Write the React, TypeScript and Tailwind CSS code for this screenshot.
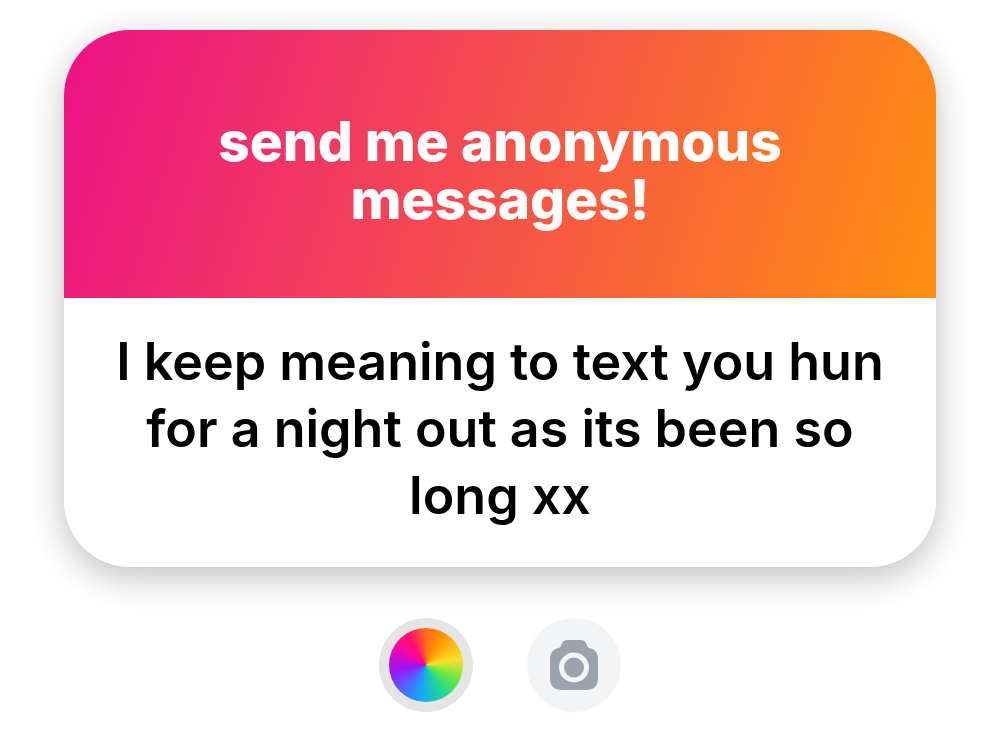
import { useState } from "react";

type PromptCardProps = {
  prompt: string;
  reply: string;
};

function PromptCard({ prompt, reply }: PromptCardProps) {
  return (
    <article className="overflow-hidden rounded-[66px] bg-white text-center shadow-[0_10px_36px_rgba(0,0,0,0.25)]">
      <header className="bg-[linear-gradient(107deg,#ec1187,#ff8f10)] px-32 pt-[82px] pb-[70px]">
        <h1 className="text-[55px] leading-[58px] font-extrabold text-white">{prompt}</h1>
      </header>
      <p className="px-12 pt-[30px] pb-[38px] text-[52px] leading-[67px] font-semibold text-black">{reply}</p>
    </article>
  );
}

function CameraIcon() {
  return (
    <svg viewBox="0 0 50 50" className="size-[50px]" aria-hidden="true">
      <path
        d="M10 8 C12 7 12 5 13 3 C14 1 16 0 18 0 H32 C34 0 36 1 37 3 C38 5 38 7 40 8 C46 9 49 13 49 19 V38 C49 46 45 50 37 50 H13 C5 50 1 46 1 38 V19 C1 13 4 9 10 8 Z"
        fill="#9ca3af"
      />
      <circle cx="25" cy="27.5" r="12.5" fill="none" stroke="#f3f4f6" strokeWidth="5" />
    </svg>
  );
}

export default function App() {
  const [picked, setPicked] = useState(false);

  return (
    <main className="min-h-screen bg-white px-16 pt-[30px] font-['Inter','Liberation_Sans',sans-serif]">
      <PromptCard
        prompt="send me anonymous messages!"
        reply="I keep meaning to text you hun for a night out as its been so long xx"
      />
      <div className="mt-[51px] flex justify-center gap-[54px] pb-6">
        <button
          type="button"
          aria-label="Change colour"
          aria-pressed={picked}
          onClick={() => setPicked(!picked)}
          className="flex size-[94px] items-center justify-center rounded-full bg-[#e4e5e4]"
        >
          <span className="size-[74px] rounded-full bg-[conic-gradient(#ff6a1c_0deg,#ff9500_30deg,#f8e02c_80deg,#6ae83c_115deg,#24dc88_145deg,#12a8f8_190deg,#4a6cfa_220deg,#a010f8_262deg,#f808a0_305deg,#ff1070_330deg,#ff6a1c_360deg)]" />
        </button>
        <button
          type="button"
          aria-label="Add photo"
          className="flex size-[94px] items-center justify-center rounded-full bg-gray-100"
        >
          <CameraIcon />
        </button>
      </div>
    </main>
  );
}
